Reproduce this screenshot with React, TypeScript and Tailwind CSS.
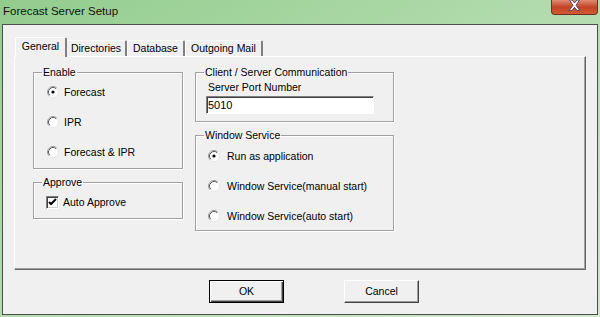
import React from "react";

const ui = "font-['Liberation_Sans',Arial,sans-serif] text-[10.5px] text-black";

const Radio = ({ checked }: { checked?: boolean }) => (
  <svg width="12" height="12" viewBox="0 0 12 12" className="shrink-0">
    <circle cx="6" cy="6" r="5.5" fill="#fff" />
    <path d="M2.11 9.89A5.5 5.5 0 0 1 9.89 2.11" fill="none" stroke="#9a9a9a" />
    <path d="M2.82 9.18A4.5 4.5 0 0 1 9.18 2.82" fill="none" stroke="#5a5a5a" />
    <path d="M9.89 2.11A5.5 5.5 0 0 1 2.11 9.89" fill="none" stroke="#e6e6e6" />
    {checked && <circle cx="6" cy="6" r="1.6" fill="#000" />}
  </svg>
);

const Check = () => (
  <div className="w-[13px] h-[13px] shrink-0 bg-white border border-t-[#808080] border-l-[#808080] border-r-white border-b-white shadow-[inset_1px_1px_0_#404040,inset_-1px_-1px_0_#d4d0c8] flex items-center justify-center">
    <svg width="9" height="9" viewBox="0 0 9 9">
      <path d="M1 4l2 2 5-5" fill="none" stroke="#000" strokeWidth="2" />
    </svg>
  </div>
);

const Group = ({ label, className, children }: { label: string; className: string; children: React.ReactNode }) => (
  <fieldset className={`border border-[#a0a0a0] shadow-[inset_1px_1px_0_#fff,1px_1px_0_#fff] ${className}`}>
    <legend className="ml-[8px] px-[1px] leading-[12px]">{label}</legend>
    {children}
  </fieldset>
);

const Option = ({ label, checked, gap }: { label: string; checked?: boolean; gap: string }) => (
  <div className={`flex items-center h-[14px] ${gap}`}>
    <Radio checked={checked} />
    <span className="leading-[14px]">{label}</span>
  </div>
);

export default function App() {
  return (
    <div className={`w-[600px] h-[317px] flex flex-col px-[2px] pb-[2px] bg-gradient-to-br from-[#92cc8d] via-[#b4dcaf] to-[#cfe9ca] ${ui}`}>
      {/* Title bar */}
      <div className="h-[24px] flex items-start justify-between">
        <span className="pl-[1px] pt-[3px] text-[11.5px] leading-[16px] text-[#111]">Forecast Server Setup</span>
        <div className="w-[47px] h-[15px] rounded-b-[4px] border border-t-0 border-[#6b3326] bg-gradient-to-b from-[#e08a70] via-[#c24325] to-[#d45a34] flex justify-center">
          <svg width="13" height="11" viewBox="0 0 13 11">
            <path d="M1.5 0h2.6L6.5 3 8.9 0h2.6L8 5.3l3.8 5.2H9.1L6.5 7.3 3.9 10.5H1.2L5 5.3z" fill="#fff" stroke="#454560" strokeWidth="0.9" />
          </svg>
        </div>
      </div>

      {/* Client area */}
      <div className="flex-1 border border-[#4e4e4e] bg-[#f0f0f0] px-[11px] pt-[12px]">
        {/* Tabs */}
        <div className="flex items-end h-[20px] pl-[1px] -mb-[1px] relative z-10">
          <div className="w-[52px] h-[20px] bg-[#f0f0f0] border-l border-t border-white border-r-[2px] border-r-[#808080] rounded-t-[2px] flex items-center justify-center pb-[1px]">
            General
          </div>
          <div className="w-[60px] h-[16px] mb-[1px] border-t border-white border-r-[2px] border-r-[#808080] rounded-t-[2px] flex items-center justify-center">
            Directories
          </div>
          <div className="w-[58px] h-[16px] mb-[1px] border-l border-t border-white border-r-[2px] border-r-[#808080] rounded-t-[2px] flex items-center justify-center">
            Database
          </div>
          <div className="w-[78px] h-[16px] mb-[1px] border-l border-t border-white border-r-[2px] border-r-[#808080] rounded-t-[2px] flex items-center justify-center">
            Outgoing Mail
          </div>
        </div>

        {/* Panel */}
        <div className="h-[214px] border border-l-white border-t-white border-r-[#696969] border-b-[#696969] shadow-[inset_-1px_-1px_0_#a0a0a0] pl-[18px] pt-[9px] flex gap-[12px]">
          <div className="w-[150px] flex flex-col gap-[7px]">
            <Group label="Enable" className="h-[103px]">
              <div className="mt-[7px] pl-[13px] flex flex-col gap-[16px]">
                <Option label="Forecast" checked gap="gap-[5px]" />
                <Option label="IPR" gap="gap-[5px]" />
                <Option label="Forecast & IPR" gap="gap-[5px]" />
              </div>
            </Group>
            <Group label="Approve" className="h-[43px]">
              <div className="mt-[8px] pl-[12px] flex items-center gap-[4px]">
                <Check />
                <span className="leading-[13px]">Auto Approve</span>
              </div>
            </Group>
          </div>

          <div className="w-[199px] flex flex-col gap-[7px]">
            <Group label="Client / Server Communication" className="h-[56px]">
              <div className="pl-[10px] flex flex-col">
                <span className="mt-[3px] ml-[2px] leading-[12px]">Server Port Number</span>
                <div className="mt-[3px] w-[168px] h-[18px] bg-white border border-t-[#808080] border-l-[#808080] border-r-white border-b-white shadow-[inset_1px_1px_0_#404040] pl-[1px] flex items-center text-[11px]">
                  5010
                </div>
              </div>
            </Group>
            <Group label="Window Service" className="h-[102px]">
              <div className="mt-[8px] pl-[12px] flex flex-col gap-[16px]">
                <Option label="Run as application" checked gap="gap-[7px]" />
                <Option label="Window Service(manual start)" gap="gap-[7px]" />
                <Option label="Window Service(auto start)" gap="gap-[7px]" />
              </div>
            </Group>
          </div>
        </div>

        {/* Buttons */}
        <div className="mt-[10px] pl-[195px] flex gap-[60px]">
          <button className="w-[75px] h-[23px] border border-black bg-[#f0f0f0] shadow-[inset_1px_1px_0_#fff,inset_-1px_-1px_0_#404040,inset_-2px_-2px_0_#a0a0a0]">
            OK
          </button>
          <button className="w-[75px] h-[23px] border border-l-white border-t-white border-r-[#404040] border-b-[#404040] bg-[#f0f0f0] shadow-[inset_-1px_-1px_0_#a0a0a0]">
            Cancel
          </button>
        </div>
      </div>
    </div>
  );
}
